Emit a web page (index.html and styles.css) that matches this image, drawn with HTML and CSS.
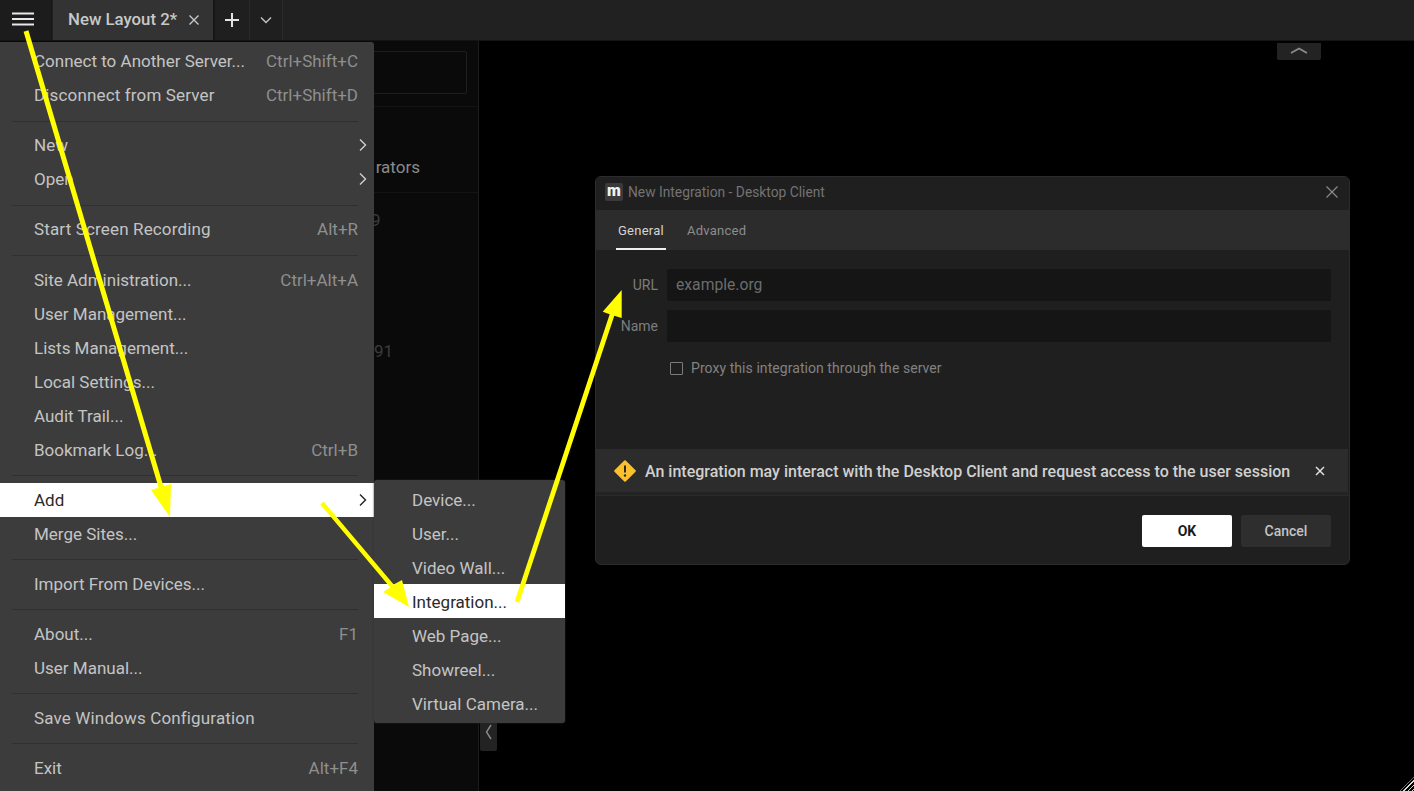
FILE: index.html
```html
<!DOCTYPE html>
<html lang="en">
<head>
<meta charset="utf-8">
<title>New Integration</title>
<link rel="stylesheet" href="styles.css">
</head>
<body>
<header class="topbar">
  <div class="burger"><svg width="24" height="16" viewBox="0 0 24 16"><path d="M1 2.500H23M1 8H23M1 13.500H23" stroke="#e8e8e8" stroke-width="2"/></svg></div>
  <div class="tab"><span>New Layout 2*</span><svg class="tab-x" width="12" height="12" viewBox="0 0 12 12"><path d="M1.500 1.500L10.500 10.500M10.500 1.500L1.500 10.500" stroke="#c8c8c8" stroke-width="1.400"/></svg></div>
  <div class="tool tool-plus"><svg width="14" height="14" viewBox="0 0 14 14"><path d="M7 0V14M0 7H14" stroke="#e4e4e4" stroke-width="2"/></svg></div>
  <div class="tool tool-more"><svg width="12" height="8" viewBox="0 0 12 8"><path d="M1 1.500L6 6.500L11 1.500" fill="none" stroke="#c4c4c4" stroke-width="1.400"/></svg></div>
</header>

<main class="workspace">
  <aside class="sidepanel">
    <div class="search-row"><div class="search"></div></div>
    <div class="panel-tabs"><span>rators</span></div>
    <div class="panel-num num-a">9</div>
    <div class="panel-num num-b">91</div>
  </aside>
  <div class="stage"></div>
</main>

<div class="collapse-top"><svg width="18" height="7" viewBox="0 0 18 7"><path d="M1 6L9 1.500L17 6" fill="none" stroke="#8c8c8c" stroke-width="1.800"/></svg></div>
<div class="collapse-left"><svg width="7" height="16" viewBox="0 0 7 16"><path d="M6 1L1.500 8L6 15" fill="none" stroke="#8c8c8c" stroke-width="1.400"/></svg></div>

<nav class="menu main-menu">
  <div class="item"><span>Connect to Another Server...</span><kbd>Ctrl+Shift+C</kbd></div>
  <div class="item"><span class="tracked">Disconnect from Server</span><kbd>Ctrl+Shift+D</kbd></div>
  <div class="sep sep-low"></div>
  <div class="item"><span>New</span><svg class="chev" width="8" height="14" viewBox="0 0 8 14"><path d="M1 1.500L6.500 7L1 12.500" fill="none" stroke="#d0d0d0" stroke-width="1.400"/></svg></div>
  <div class="item"><span>Open</span><svg class="chev" width="8" height="14" viewBox="0 0 8 14"><path d="M1 1.500L6.500 7L1 12.500" fill="none" stroke="#d0d0d0" stroke-width="1.400"/></svg></div>
  <div class="sep sep-low"></div>
  <div class="item"><span class="tracked">Start Screen Recording</span><kbd>Alt+R</kbd></div>
  <div class="sep sep-low sep-wide"></div>
  <div class="item"><span>Site Administration...</span><kbd>Ctrl+Alt+A</kbd></div>
  <div class="item"><span>User Management...</span></div>
  <div class="item"><span>Lists Management...</span></div>
  <div class="item"><span>Local Settings...</span></div>
  <div class="item"><span>Audit Trail...</span></div>
  <div class="item"><span>Bookmark Log...</span><kbd>Ctrl+B</kbd></div>
  <div class="sep"></div>
  <div class="item active"><span>Add</span><svg class="chev" width="8" height="14" viewBox="0 0 8 14"><path d="M1 1.500L6.500 7L1 12.500" fill="none" stroke="#222" stroke-width="1.400"/></svg></div>
  <div class="item"><span>Merge Sites...</span></div>
  <div class="sep"></div>
  <div class="item"><span>Import From Devices...</span></div>
  <div class="sep"></div>
  <div class="item"><span>About...</span><kbd>F1</kbd></div>
  <div class="item"><span>User Manual...</span></div>
  <div class="sep"></div>
  <div class="item"><span class="tracked">Save Windows Configuration</span></div>
  <div class="sep"></div>
  <div class="item"><span>Exit</span><kbd>Alt+F4</kbd></div>
</nav>

<nav class="menu sub-menu">
  <div class="item"><span>Device...</span></div>
  <div class="item"><span>User...</span></div>
  <div class="item"><span>Video Wall...</span></div>
  <div class="item active"><span>Integration...</span></div>
  <div class="item"><span>Web Page...</span></div>
  <div class="item"><span>Showreel...</span></div>
  <div class="item"><span>Virtual Camera...</span></div>
</nav>

<section class="dialog">
  <div class="titlebar">
    <div class="app-icon">m</div>
    <div class="title">New Integration - Desktop Client</div>
    <svg class="close" width="12" height="12" viewBox="0 0 12 12"><path d="M0.500 0.500L11.500 11.500M11.500 0.500L0.500 11.500" stroke="#8a8a8a" stroke-width="1.200"/></svg>
  </div>
  <div class="tabs">
    <div class="dtab current">General</div>
    <div class="dtab">Advanced</div>
  </div>
  <div class="form">
    <div class="field"><label>URL</label><div class="input">example.org</div></div>
    <div class="field"><label>Name</label><div class="input"></div></div>
    <div class="check"><span class="box"></span><span>Proxy this integration through the server</span></div>
  </div>
  <div class="banner">
    <svg class="warn" width="22" height="22" viewBox="0 0 22 22"><path d="M11 1.200L20.800 11L11 20.800L1.200 11Z" fill="#fbc02d" stroke="#fbc02d" stroke-width="2" stroke-linejoin="round"/><path d="M11 5.500V12.500" stroke="#2a2a2a" stroke-width="2"/><circle cx="11" cy="15.500" r="1.200" fill="#2a2a2a"/></svg>
    <span class="banner-text">An integration may interact with the Desktop Client and request access to the user session</span>
    <svg class="banner-x" width="10" height="10" viewBox="0 0 10 10"><path d="M1 1L9 9M9 1L1 9" stroke="#e0e0e0" stroke-width="1.500"/></svg>
  </div>
  <div class="actions">
    <button class="btn ok">OK</button>
    <button class="btn cancel">Cancel</button>
  </div>
</section>

<div class="resize-grip"></div>

<svg class="arrows" width="1414" height="791" viewBox="0 0 1414 791">
  <g fill="#ffff00" stroke="none">
    <polygon points="23.600,31.700 28.400,30.300 163.400,486.300 171,484 170,517 151,490 158.600,487.700"/>
    <polygon points="320.300,504.400 323.700,501.600 393.700,584.600 402,580 409,607 383,592 390.300,587.400"/>
    <polygon points="514.700,601.300 519.300,602.700 614.300,315.750 621.700,318 621.700,290 602.700,311.700 609.700,314.250"/>
  </g>
</svg>
</body>
</html>
```
FILE: styles.css
```css
* { box-sizing: border-box; }
html, body { margin: 0; height: 100%; overflow: hidden; }
body {
  background: #000;
  font-family: Roboto, "Liberation Sans", sans-serif;
  color: #d0d0d0;
  display: flex;
  flex-direction: column;
}

/* top bar */
.topbar {
  height: 41px;
  flex: none;
  background: #212121;
  border-bottom: 1px solid #141414;
  display: flex;
}
.burger {
  width: 52px;
  background: #1c1c1c;
  border-right: 1px solid #181818;
  display: flex;
  align-items: center;
  padding-left: 11px;
  padding-bottom: 3px;
}
.tab {
  width: 162px;
  margin-left: 1px;
  background: #333;
  display: flex;
  align-items: center;
  padding: 0 0 3px 15px;
  font-size: 16.800px;
  font-weight: 500;
  color: #c8c8c8;
  border-right: 2px solid #161616;
}
.tab-x { margin-left: 11px; margin-top: 2px; }
.tool {
  display: flex;
  align-items: center;
  justify-content: center;
  border-right: 1px solid #2a2a2a;
}
.tool-plus { width: 35px; background: #1f1f1f; }
.tool-more { width: 33px; background: #1f1f1f; }

/* workspace */
.workspace { flex: 1; display: flex; min-height: 0; }
.sidepanel {
  width: 479px;
  flex: none;
  background: #0a0a0a;
  border-right: 1px solid #1c1c1c;
  position: relative;
}
.search-row {
  height: 66px;
  padding: 10px 11px 0 0;
  border-bottom: 1px solid #141414;
}
.search {
  height: 43px;
  border: 1px solid #1e1e1e;
  border-radius: 2px;
}
.panel-tabs {
  height: 86px;
  border-bottom: 1px solid #141414;
  padding: 50px 58px 0 0;
  text-align: right;
  font-size: 17px;
  color: #8a8a8a;
  line-height: 20px;
}
.panel-num { position: absolute; color: #3c3c3c; font-size: 17px; line-height: 20px; }
.num-a { left: 371px; top: 169px; }
.num-b { left: 374px; top: 300px; }
.stage { flex: 1; background: #000; }

.collapse-top {
  position: absolute;
  left: 1277px;
  top: 43px;
  width: 44px;
  height: 17px;
  background: #232323;
  border-radius: 0 0 2px 2px;
  display: flex;
  justify-content: center;
  padding-top: 4px;
}
.collapse-left {
  position: absolute;
  left: 480px;
  top: 721px;
  width: 17px;
  height: 30px;
  background: #232323;
  border-radius: 2px;
  display: flex;
  justify-content: center;
  padding-top: 3px;
}

/* menus */
.menu {
  position: absolute;
  background: #3c3c3c;
  font-size: 17px;
  color: #c4c4c4;
}
.main-menu {
  left: 0;
  top: 42px;
  width: 374px;
  height: 749px;
  padding-top: 2px;
  border-radius: 0 3px 0 0;
}
.sub-menu {
  left: 374px;
  top: 480px;
  width: 191px;
  height: 243px;
  padding-top: 2px;
  border-radius: 3px;
  box-shadow: 0 0 2px #2a2a2a;
}
.item {
  height: 34px;
  display: flex;
  align-items: center;
  justify-content: space-between;
  padding: 0 16px 0 34px;
  white-space: nowrap;
}
.sub-menu .item { padding: 1px 16px 0 38px; }
.tracked { letter-spacing: 0.15px; }
.item kbd { font: inherit; color: #8f8f8f; }
.item.active { background: #fff; color: #2a2a2a; }
.chev { margin-right: -9px; }
.sep {
  height: 16px;
  margin: 0 16px 0 12px;
  position: relative;
}
.sep-wide { height: 17px; }
.sep::after {
  content: "";
  position: absolute;
  left: 0;
  right: 0;
  top: 8px;
  height: 1px;
  background: #303030;
}
.sep-low::after { top: 9px; }

/* dialog */
.dialog {
  position: absolute;
  left: 595px;
  top: 176px;
  width: 755px;
  height: 389px;
  background: #1f1f1f;
  border: 1px solid #2c2c2c;
  border-radius: 6px;
  box-shadow: 0 0 3px #000;
  display: flex;
  flex-direction: column;
  overflow: hidden;
}
.titlebar {
  height: 33px;
  flex: none;
  display: flex;
  align-items: center;
  padding: 0 0 4px 9px;
  background: #1f1f1f;
  font-size: 13.800px;
  color: #737373;
}
.app-icon {
  width: 18px;
  height: 18px;
  background: #3a3a3a;
  border-radius: 2px;
  color: #f0f0f0;
  font-weight: 900;
  font-size: 16px;
  line-height: 15px;
  text-align: center;
}
.title { margin-left: 5px; flex: 1; }
.close { margin-right: 11px; }
.tabs {
  height: 40px;
  flex: none;
  background: #2c2c2c;
  display: flex;
  padding-left: 20px;
  gap: 19px;
  font-size: 13px;
}
.dtab {
  color: #8c8c8c;
  padding: 13px 2px 0;
  height: 40px;
  letter-spacing: 0.25px;
}
.dtab.current { color: #d4d4d4; border-bottom: 2px solid #f0f0f0; }
.form { flex: 1; padding-top: 19px; }
.field {
  display: flex;
  align-items: center;
  margin-bottom: 9px;
  height: 32px;
}
.field label {
  width: 62px;
  text-align: right;
  font-size: 14px;
  color: #7c7c7c;
  padding-bottom: 1px;
}
.input {
  margin-left: 9px;
  width: 664px;
  height: 32px;
  background: #151515;
  border-radius: 2px;
  color: #6c6c6c;
  font-size: 15.700px;
  line-height: 32px;
  padding-left: 9px;
}
.check {
  display: flex;
  align-items: center;
  margin: 18px 0 0 74px;
  font-size: 14px;
  color: #828282;
  letter-spacing: 0.06px;
}
.box {
  width: 13px;
  height: 13px;
  border: 1px solid #7c7c7c;
  border-radius: 1px;
  margin-right: 8px;
}
.banner {
  height: 46px;
  flex: none;
  margin-right: 1px;
  background: #2c2c2c;
  border-bottom: 3px solid #232323;
  display: flex;
  align-items: center;
  padding: 1px 0 0 18px;
  font-size: 16px;
  font-weight: 500;
  color: #d0d0d0;
}
.warn { flex: none; }
.banner-text { margin-left: 9px; white-space: nowrap; }
.banner-x { margin-left: 25px; }
.actions {
  height: 69px;
  flex: none;
  border-top: 1px solid #2a2a2a;
  display: flex;
  justify-content: flex-end;
  gap: 9px;
  padding: 19px 18px 0 0;
}
.btn {
  width: 90px;
  height: 32px;
  border: 0;
  border-radius: 2px;
  font-family: inherit;
  font-size: 14px;
  font-weight: 500;
  padding: 0;
}
.ok { background: #fff; color: #1c1c1c; font-weight: 700; }
.cancel { background: #2e2e2e; color: #c4c4c4; }

.resize-grip {
  position: absolute;
  right: 0;
  bottom: 0;
  width: 14px;
  height: 14px;
  clip-path: polygon(100% 0, 100% 100%, 0 100%);
  background: repeating-linear-gradient(135deg, #d8d8d8 0 1px, #000 1px 3px);
}

.arrows { position: absolute; left: 0; top: 0; pointer-events: none; }
```
